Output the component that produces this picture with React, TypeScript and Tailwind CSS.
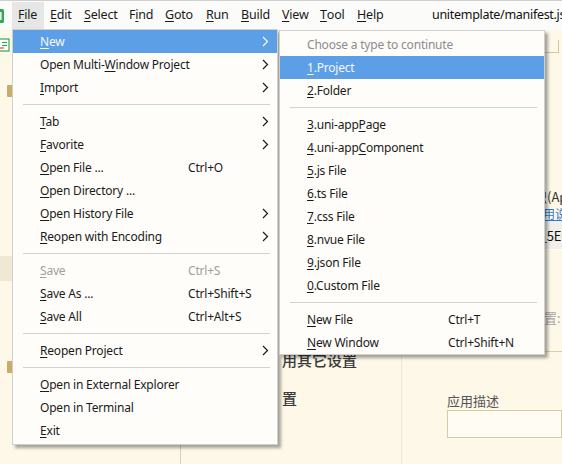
import React from 'react'

type Item =
  | 'sep'
  | {
      label: string
      keys?: string
      arrow?: boolean
      active?: boolean
      disabled?: boolean
    }

const FILE_MENU: Item[] = [
  { label: '&New', arrow: true, active: true },
  { label: 'Open Multi-&Window Project', arrow: true },
  { label: '&Import', arrow: true },
  'sep',
  { label: '&Tab', arrow: true },
  { label: '&Favorite', arrow: true },
  { label: '&Open File ...', keys: 'Ctrl+O' },
  { label: '&Open Directory ...' },
  { label: '&Open History File', arrow: true },
  { label: '&Reopen with Encoding', arrow: true },
  'sep',
  { label: '&Save', keys: 'Ctrl+S', disabled: true },
  { label: '&Save As ...', keys: 'Ctrl+Shift+S' },
  { label: '&Save All', keys: 'Ctrl+Alt+S' },
  'sep',
  { label: '&Reopen Project', arrow: true },
  'sep',
  { label: '&Open in External Explorer' },
  { label: 'Open in Terminal' },
  { label: '&Exit' },
]

const NEW_MENU: Item[] = [
  { label: '&1.Project', active: true },
  { label: '&2.Folder' },
  'sep',
  { label: '&3.uni-app&Page' },
  { label: '&4.uni-app&Component' },
  { label: '&5.js File' },
  { label: '&6.ts File' },
  { label: '&7.css File' },
  { label: '&8.nvue File' },
  { label: '&9.json File' },
  { label: '&0.Custom File' },
  'sep',
  { label: '&New File', keys: 'Ctrl+T' },
  { label: '&New Window', keys: 'Ctrl+Shift+N' },
]

const MENUBAR = [
  { label: '&File', w: 'w-[32px]', hover: true },
  { label: '&Edit', w: 'w-[34px]' },
  { label: '&Select', w: 'w-[45px]' },
  { label: 'F&ind', w: 'w-[36px]' },
  { label: '&Goto', w: 'w-[41px]' },
  { label: '&Run', w: 'w-[35px]' },
  { label: '&Build', w: 'w-[41px]' },
  { label: '&View', w: 'w-[38px]' },
  { label: '&Tool', w: 'w-[37px]' },
  { label: '&Help', w: 'w-[39px]' },
]

// "&" marks the mnemonic letter that gets underlined
function Mnemonic({ text }: { text: string }) {
  const out: React.ReactNode[] = []
  let buf = ''
  for (let i = 0; i < text.length; i++) {
    if (text[i] === '&' && i + 1 < text.length) {
      if (buf) out.push(buf)
      buf = ''
      out.push(
        <span key={i} className="underline underline-offset-[2px] decoration-1">
          {text[i + 1]}
        </span>,
      )
      i++
    } else {
      buf += text[i]
    }
  }
  if (buf) out.push(buf)
  return <>{out}</>
}

function Chevron() {
  return (
    <svg width="7" height="11" viewBox="0 0 7 11" className="shrink-0">
      <polyline
        points="1,1 5.5,5.5 1,10"
        fill="none"
        stroke="currentColor"
        strokeWidth="1.2"
      />
    </svg>
  )
}

function MenuList({ items, labelW }: { items: Item[]; labelW: string }) {
  return (
    <>
      {items.map((it, i) =>
        it === 'sep' ? (
          <div key={i} className="h-[11px] flex items-center pl-[10px] pr-[7px]">
            <div className="h-px w-full bg-[#d2d2d0]" />
          </div>
        ) : (
          <div
            key={i}
            className={`flex items-center h-[23px] pl-[27px] pr-[8px] ${
              it.active
                ? 'bg-[#5c9fe6] text-[#f6f8fb]'
                : it.disabled
                  ? 'text-[#a0a0a0]'
                  : 'text-[#1b1b1b]'
            }`}
          >
            <span className={`${labelW} shrink-0 whitespace-nowrap`}>
              <Mnemonic text={it.label} />
            </span>
            <span className="flex-1 whitespace-nowrap">{it.keys}</span>
            {it.arrow && <Chevron />}
          </div>
        ),
      )}
    </>
  )
}

export default function App() {
  return (
    <div className="relative w-[562px] h-[464px] overflow-hidden bg-[#fdf8e8] font-['Noto_Sans','Noto_Sans_CJK_SC',sans-serif] text-[12px] leading-none">
      {/* menubar */}
      <div className="h-[30px] flex items-stretch bg-[#fbfbf9] border-t border-[#cfcfcf]">
        <div className="w-[12px] shrink-0 flex items-center">
          <svg width="12" height="16" viewBox="0 0 12 16">
            <rect x="-6" y="1" width="10" height="14" rx="1.5" fill="#34a853" />
            <rect x="-4" y="4" width="5.5" height="8" fill="#ffffff" />
          </svg>
        </div>
        {MENUBAR.map((m) => (
          <div
            key={m.label}
            className={`${m.w} shrink-0 mb-[1px] mt-[1px] flex items-center pl-[6px] text-[12.5px] tracking-[-0.2px] text-[#1a1a1a] whitespace-nowrap ${
              m.hover ? 'bg-[#e6e6e6]' : ''
            }`}
          >
            <Mnemonic text={m.label} />
          </div>
        ))}
        <div className="pl-[42px] flex items-center text-[12.5px] tracking-[-0.3px] text-[#111] whitespace-nowrap">
          unitemplate/manifest.json
        </div>
      </div>

      {/* editor behind the menus */}
      <div className="flex h-[434px]">
        <div className="w-[12px] shrink-0 flex flex-col">
          <svg width="12" height="14" viewBox="0 0 12 14" className="mt-[8px]">
            <rect x="-3" y="1" width="12" height="12" fill="#ffffff" stroke="#34a853" strokeWidth="1.2" />
            <line x1="2" y1="4.5" x2="7" y2="4.5" stroke="#34a853" strokeWidth="1.2" />
            <line x1="2" y1="7.5" x2="7" y2="7.5" stroke="#34a853" strokeWidth="1.2" />
            <line x1="-2" y1="10" x2="4" y2="10" stroke="#e0463a" strokeWidth="1.2" />
          </svg>
          <div className="mt-[33px] ml-[7px] w-[5px] h-[12px] bg-[#c8ac6a] rounded-l-[1px]" />
          <div className="mt-[159px] h-[25px] bg-[#efe8d3]" />
          <div className="mt-[80px] ml-[7px] w-[5px] h-[12px] bg-[#c8ac6a] rounded-l-[1px]" />
        </div>

        <div className="w-[169px] shrink-0 border-r border-[#d9cfb3]" />

        <div className="w-[220px] shrink-0 flex flex-col pl-[101px] text-[15px] font-medium text-[#3a3a3a] font-['Noto_Sans_CJK_SC',sans-serif]">
          <div className="mt-[322px] whitespace-nowrap">用其它设置</div>
          <div className="mt-[23px] whitespace-nowrap">置</div>
        </div>

        <div className="flex-1 min-w-0 overflow-hidden flex flex-col border-l border-[#efe6cd] pl-[45px] text-[13px] font-['Noto_Sans_CJK_SC',sans-serif] text-[#333]">
          <div className="mt-[10px] ml-auto mr-[3px] w-[60px] h-[13px] border-r border-b border-[#d6c69c]" />
          <div className="mt-[137px] pl-[48px] whitespace-nowrap">应用标识(AppID)</div>
          <div className="mt-[5px] pl-[84px] whitespace-nowrap text-[12px] text-[#2a78d6] underline">
            使用说明
          </div>
          <div className="mt-[1px] h-[29px] bg-[#f1efe8] border-b border-white flex items-center pl-[48px] whitespace-nowrap text-[#111]">
            __UNI__5E0A1C3
          </div>
          <div className="mt-[53px] h-[49px] flex items-center pb-[20px] border-b border-[#dccfa8] pl-[58px] whitespace-nowrap text-[#a8a8a8]">
            版本配置:
          </div>
          <div className="mt-[42px] text-[13px] text-[#555] whitespace-nowrap">应用描述</div>
          <div className="mt-[3px] h-[28px] border border-[#d8cba2] bg-[#fffcf3]" />
        </div>
      </div>

      {/* File menu */}
      <div className="absolute left-[12px] top-[29px] w-[266px] bg-[#fefdfa] border border-[#cfcfcf] pb-[2px] tracking-[-0.2px] shadow-[3px_3px_3px_rgba(0,0,0,0.35)]">
        <MenuList items={FILE_MENU} labelW="w-[148px]" />
      </div>

      {/* New submenu */}
      <div className="absolute left-[279px] top-[30px] w-[266px] bg-[#fefdfa] border border-[#cfcfcf] pt-[2px] tracking-[-0.2px] shadow-[3px_3px_3px_rgba(0,0,0,0.35)]">
        <div className="h-[23px] flex items-center pl-[27px] text-[#8c8c8c] whitespace-nowrap">
          Choose a type to continute
        </div>
        <MenuList items={NEW_MENU} labelW="w-[141px]" />
      </div>
    </div>
  )
}
